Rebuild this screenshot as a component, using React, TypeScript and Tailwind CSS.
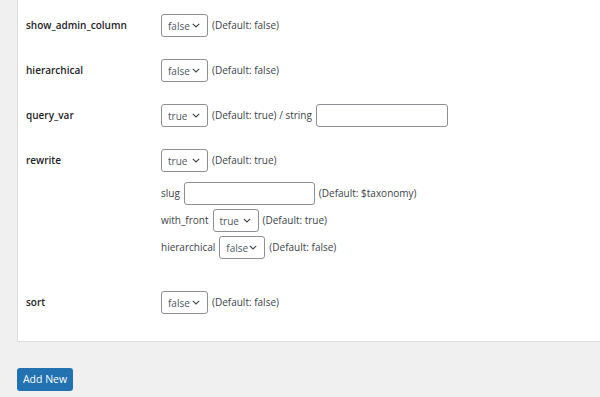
import React from "react";

const font = { fontFamily: '"Open Sans", "Noto Sans", "Liberation Sans", sans-serif' };

const Chevron = () => (
  <svg width="8" height="5" viewBox="0 0 8 5" className="ml-auto shrink-0">
    <path d="M0.8 0.8 L4 4 L7.2 0.8" fill="none" stroke="#3c434a" strokeWidth="1.1" />
  </svg>
);

const Select = ({ value, width = "w-[47px]" }: { value: string; width?: string }) => (
  <div
    className={`inline-flex ${width} h-[23px] shrink-0 items-center rounded-[3px] border border-[#8c8f94] bg-white pl-[6px] pr-[7px] text-[10px] text-[#50575e]`}
  >
    <span className="pt-[2px]">{value}</span>
    <Chevron />
  </div>
);

const TextInput = ({ width }: { width: string }) => (
  <div className={`${width} h-[23px] shrink-0 rounded-[3px] border border-[#8c8f94] bg-white`} />
);

const Note = ({ children }: { children: React.ReactNode }) => (
  <span className="text-[10px] text-[#3c434a]">{children}</span>
);

const Row = ({ label, children }: { label: string; children: React.ReactNode }) => (
  <div className="flex items-start pb-[22px]">
    <div className="w-[135px] shrink-0 text-[10px] font-semibold leading-[23px] text-[#1d2327]">
      {label}
    </div>
    <div className="flex flex-col">{children}</div>
  </div>
);

const Line = ({ children, className = "" }: { children: React.ReactNode; className?: string }) => (
  <div className={`flex items-center gap-[4px] ${className}`}>{children}</div>
);

export default function App() {
  return (
    <div className="min-h-[397px] w-[600px] overflow-hidden bg-[#f0f0f1]" style={font}>
      <div className="ml-[17px] border-b border-l border-[#dcdcde] bg-white pl-[8px] pt-[14px] pb-[5px]">
        <Row label="show_admin_column">
          <Line>
            <Select value="false" />
            <Note>(Default: false)</Note>
          </Line>
        </Row>
        <Row label="hierarchical">
          <Line>
            <Select value="false" />
            <Note>(Default: false)</Note>
          </Line>
        </Row>
        <Row label="query_var">
          <Line>
            <Select value="true" />
            <Note>(Default: true) / string</Note>
            <TextInput width="w-[132px]" />
          </Line>
        </Row>
        <div className="flex items-start pb-[32px]">
          <div className="w-[135px] shrink-0 text-[10px] font-semibold leading-[23px] text-[#1d2327]">
            rewrite
          </div>
          <div className="flex flex-col">
            <Line>
              <Select value="true" />
              <Note>(Default: true)</Note>
            </Line>
            <Line className="mt-[10px]">
              <Note>slug</Note>
              <TextInput width="w-[131px]" />
              <Note>(Default: $taxonomy)</Note>
            </Line>
            <Line className="mt-[4px]">
              <Note>with_front</Note>
              <Select value="true" width="w-[46px]" />
              <Note>(Default: true)</Note>
            </Line>
            <Line className="mt-[4px]">
              <Note>hierarchical</Note>
              <Select value="false" width="w-[46px]" />
              <Note>(Default: false)</Note>
            </Line>
          </div>
        </div>
        <Row label="sort">
          <Line>
            <Select value="false" />
            <Note>(Default: false)</Note>
          </Line>
        </Row>
      </div>
      <div className="ml-[17px] mt-[23px]">
        <button className="h-[23px] w-[56px] rounded-[3px] bg-[#2271b1] text-[10.5px] text-white">
          Add New
        </button>
      </div>
    </div>
  );
}
